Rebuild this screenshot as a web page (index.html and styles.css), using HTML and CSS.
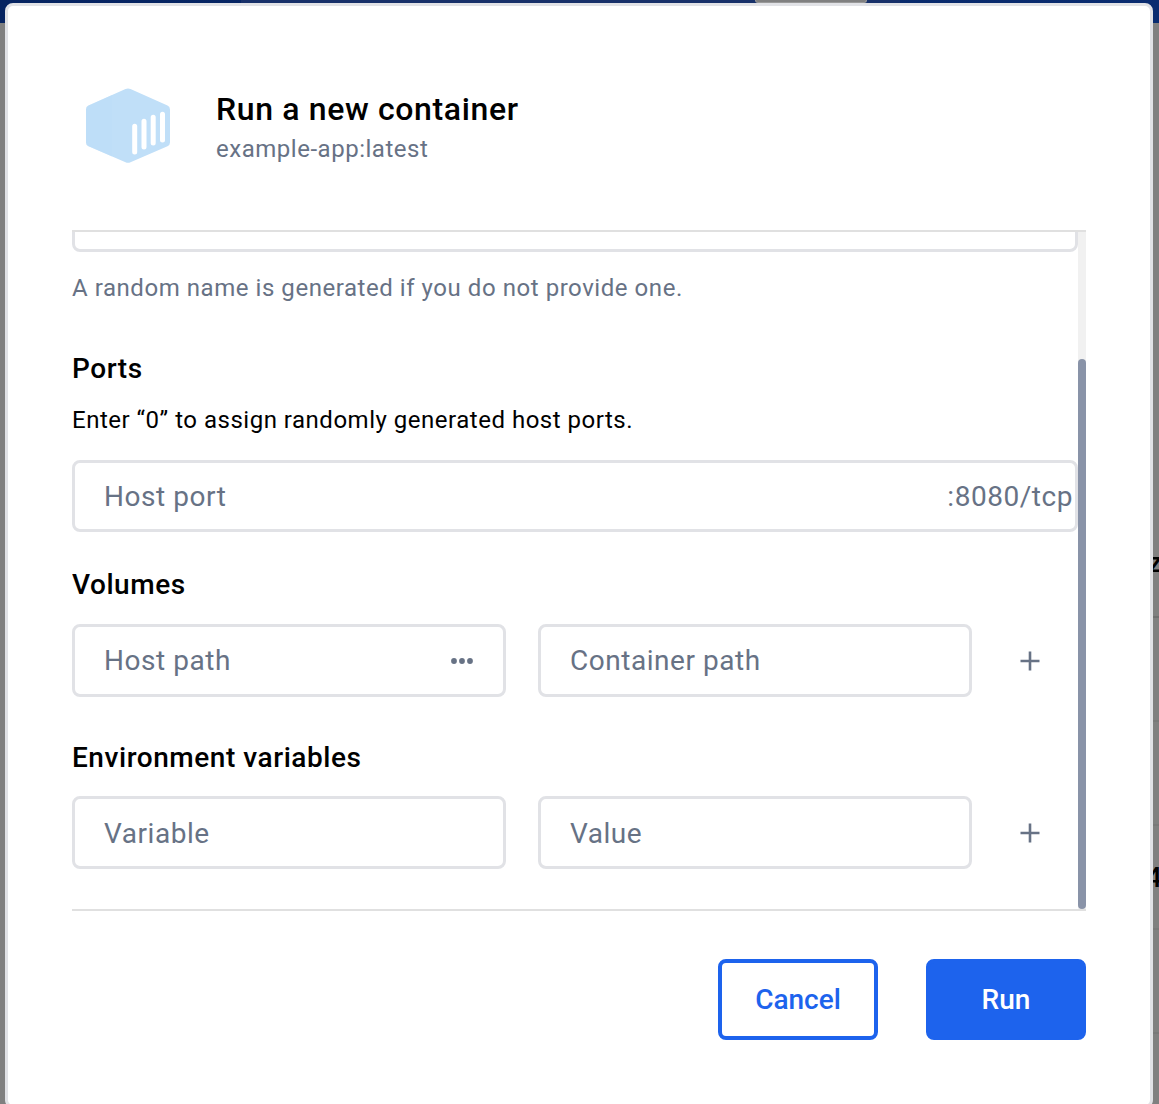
FILE: index.html
```html
<!DOCTYPE html>
<html lang="en">
<head>
<meta charset="utf-8">
<title>Run a new container</title>
<link rel="stylesheet" href="styles.css">
</head>
<body>
<div class="page">
  <header class="topbar"><div class="search"><span class="search-key"></span></div></header>
  <div class="table">
    <div class="row first"><span>z</span></div>
    <div class="row"></div>
    <div class="row"></div>
    <div class="row fourth"><span>4</span></div>
    <div class="row"></div>
  </div>
</div>
<main class="dialog">
  <header class="dialog-header">
    <svg class="logo" viewBox="0 0 84 76" width="84" height="76">
      <path fill="#c0dff8" d="M39.500 1.100Q42 -.1 44.500 1.100L81.500 17.600Q84 18.800 84 21.500V54.500Q84 57.100 81.500 58.300L44.500 74.200Q42 75.300 39.500 74.200L2.500 58.300Q0 57.100 0 54.500V21.500Q0 18.800 2.500 17.600Z"/>
      <path fill="#bcdcf7" d="M0 21.500Q0 18.800 2.500 17.600L26 7.100V68.400L2.500 58.300Q0 57.100 0 54.500Z" opacity=".4"/>
      <path stroke="#fff" stroke-width="5" stroke-linecap="round" d="M48.700 38.300V64M58 33.300V59M67.200 29.300V55M76.500 26.300V52"/>
    </svg>
    <div>
      <h1 class="title">Run a new container</h1>
      <p class="subtitle">example-app:latest</p>
    </div>
  </header>
  <section class="scroller">
    <div class="form">
      <div class="field name-field"></div>
      <p class="helper">A random name is generated if you do not provide one.</p>
      <h2 class="heading ports-heading">Ports</h2>
      <p class="hint">Enter “0” to assign randomly generated host ports.</p>
      <div class="field port-field"><span>Host port</span><span>:8080/tcp</span></div>
      <h2 class="heading volumes-heading">Volumes</h2>
      <div class="pair">
        <div class="field"><span>Host path</span>
          <svg class="dots" width="24" height="8" viewBox="0 0 24 8" fill="#677285"><circle cx="4" cy="4" r="2.900"/><circle cx="12" cy="4" r="2.900"/><circle cx="20" cy="4" r="2.900"/></svg>
        </div>
        <div class="field"><span>Container path</span></div>
        <svg class="plus" width="20" height="20" viewBox="0 0 20 20"><path d="M10 .5V19.500M.5 10H19.500" stroke="#677285" stroke-width="2.600"/></svg>
      </div>
      <h2 class="heading env-heading">Environment variables</h2>
      <div class="pair env">
        <div class="field"><span>Variable</span></div>
        <div class="field"><span>Value</span></div>
        <svg class="plus" width="20" height="20" viewBox="0 0 20 20"><path d="M10 .5V19.500M.5 10H19.500" stroke="#677285" stroke-width="2.600"/></svg>
      </div>
    </div>
    <div class="track"><div class="thumb"></div></div>
  </section>
  <footer class="actions">
    <button class="button cancel">Cancel</button>
    <button class="button run">Run</button>
  </footer>
</main>
</body>
</html>
```
FILE: styles.css
```css
* { box-sizing: border-box; }
body { margin: 0; height: 1104px; overflow: hidden; position: relative; font-family: Roboto, sans-serif; color: #000; }
h1, h2, p { margin: 0; }
.page { height: 1104px; background: #808080; overflow: hidden; }
.topbar { height: 23px; background: linear-gradient(90deg, #062461, #0a2c70); padding-left: 241px; }
.search { width: 659px; height: 3px; background: #18316a; padding-left: 514px; }
.search-key { display: block; width: 112px; height: 3px; background: #808080; border: 1px solid #999; border-top: 0; border-radius: 0 0 4px 4px; }
.table { padding: 491px 0 0 1100px; }
.row { height: 104px; border-bottom: 2px solid #797979; display: flex; justify-content: flex-end; align-items: center; font-size: 28px; font-weight: 500; line-height: 30px; }
.first { border-bottom-color: #707070; padding-bottom: 4px; }
.fourth { padding-top: 2px; }
.row span { margin-right: -3px; }
.dialog { position: absolute; left: 5px; top: 3px; width: 1148px; height: 1105px; background: #fff; border: 3px solid #e1e2e6; border-radius: 8px; padding: 82px 64px 0; }
.dialog-header { display: flex; height: 142px; padding-left: 14px; gap: 46px; }
.logo { display: block; }
.title { font-size: 32px; font-weight: 500; line-height: 42px; letter-spacing: .64px; }
.subtitle { font-size: 24px; line-height: 36px; letter-spacing: .52px; color: #677285; margin-top: 1px; }
.scroller { width: 1014px; height: 681px; border: solid #e0e0e0; border-width: 2px 0; display: flex; overflow: hidden; }
.form { width: 1006px; height: 677px; display: flex; flex-direction: column; justify-content: flex-end; padding-bottom: 40px; }
.field { height: 73px; border: 3px solid #e1e2e6; border-radius: 8px; padding: 0 29px; display: flex; align-items: center; justify-content: space-between; font-size: 28px; letter-spacing: .54px; color: #677285; }
.name-field, .port-field { height: 72px; flex: none; }
.port-field { padding-right: 2px; }
.helper, .hint { font-size: 24px; line-height: 36px; letter-spacing: .55px; flex: none; }
.helper { color: #677285; margin-top: 18px; }
.heading { font-size: 28px; font-weight: 500; line-height: 40px; letter-spacing: .55px; flex: none; }
.ports-heading { margin-top: 43px; }
.hint { margin: 13px 0 22px; letter-spacing: .51px; }
.volumes-heading { margin: 33px 0 19px; }
.env-heading { margin: 41px 0 18px; }
.pair { display: grid; grid-template-columns: 434px 434px 36px; column-gap: 32px; align-items: center; flex: none; }
.env .field { padding-top: 1px; }
.plus { justify-self: end; }
.dots { display: block; }
.track { width: 8px; background: #f1f1f1; padding-top: 127px; }
.thumb { height: 550px; background: #8993a8; border-radius: 4px; }
.actions { display: flex; justify-content: flex-end; gap: 48px; padding-top: 48px; }
.button { width: 160px; height: 81px; border: 4px solid #1d63ed; border-radius: 8px; font: 500 28px/34px Roboto, sans-serif; padding: 0; }
.cancel { background: #fff; color: #1d63ed; }
.run { background: #1d63ed; color: #fff; }
```
